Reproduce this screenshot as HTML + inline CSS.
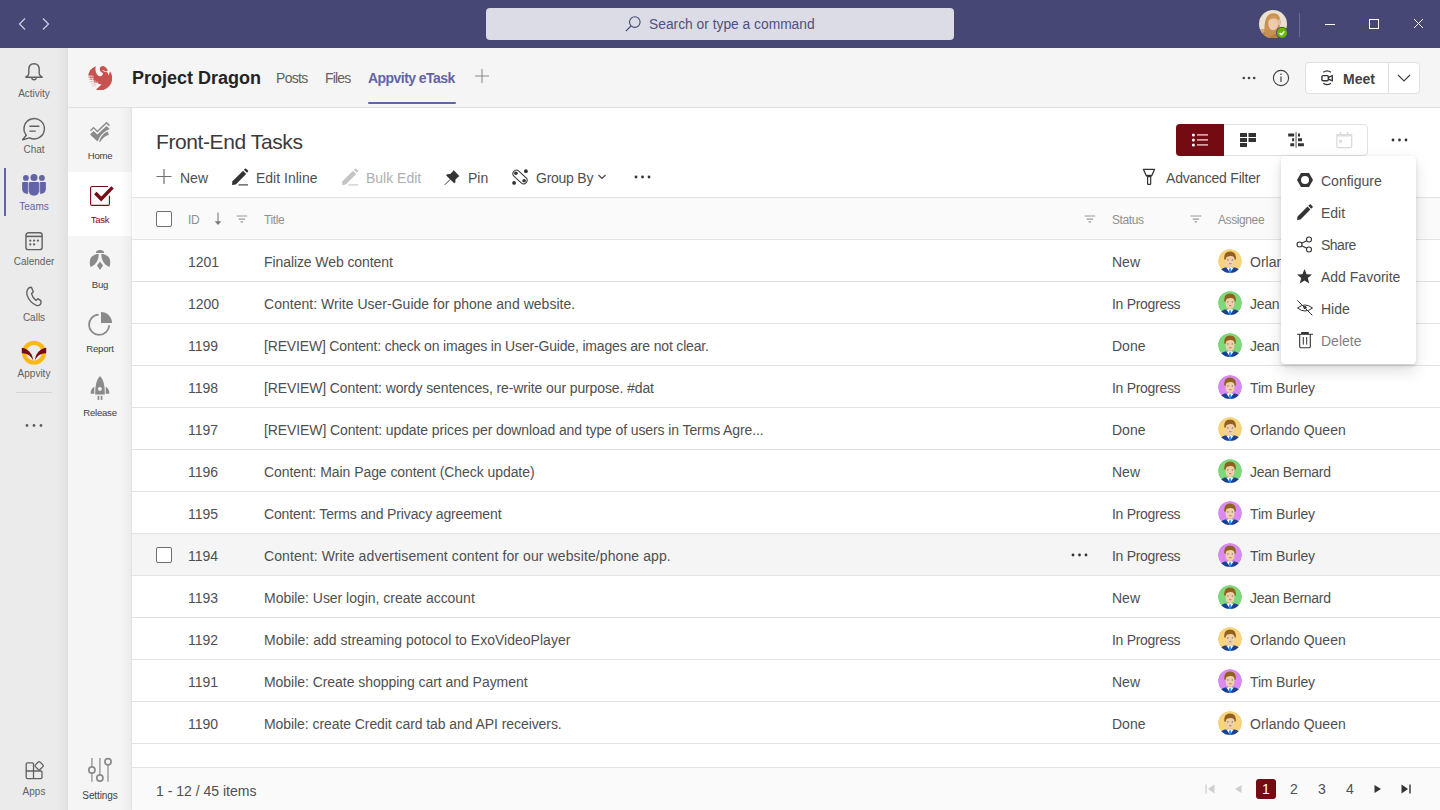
<!DOCTYPE html>
<html><head><meta charset="utf-8">
<style>
*{box-sizing:border-box;margin:0;padding:0}
html,body{width:1440px;height:810px;overflow:hidden;background:#fff;font-family:"Liberation Sans",sans-serif;color:#252423}
.a{position:absolute}
.t{position:absolute;white-space:nowrap;line-height:1}
#top{left:0;top:0;width:1440px;height:48px;background:#464775}
#search{left:486px;top:8px;width:468px;height:32px;background:#dcdce6;border-radius:4px}
#rail{left:0;top:48px;width:68px;height:762px;background:#ebebeb}
#hdr{left:68px;top:48px;width:1372px;height:60px;background:#f5f5f5;border-bottom:1px solid #e0e0e0}
#side{left:68px;top:108px;width:64px;height:702px;background:#f5f5f5}
#main{left:132px;top:108px;width:1308px;height:702px;background:#fff}
.rl{font-size:10px;color:#616161;text-align:center;width:68px;left:0}
.sl{font-size:9.6px;color:#424242;text-align:center;width:64px;left:68px;letter-spacing:-0.25px}
.c14{font-size:14px;color:#4f4f4f}
.hd{font-size:12px;color:#8f8f8f;letter-spacing:-0.4px}
.rowb{position:absolute;left:132px;width:1308px;height:1px;background:#e3e3e3}
.mi{font-size:14px;color:#4f4f4f}
</style></head><body>
<div id="top" class="a"></div>
<div id="search" class="a"></div>
<div id="rail" class="a"></div>
<div id="hdr" class="a"></div>
<div id="side" class="a"></div>
<div id="main" class="a"></div>


<svg class="a" style="left:16px;top:16px" width="40" height="16" viewBox="0 0 40 16">
<path d="M9 2.5 L3.5 8 L9 13.5" fill="none" stroke="#d0d0e4" stroke-width="1.2"/>
<path d="M27 2.5 L32.5 8 L27 13.5" fill="none" stroke="#d0d0e4" stroke-width="1.2"/>
</svg>
<svg class="a" style="left:625px;top:16px" width="16" height="16" viewBox="0 0 16 16">
<circle cx="9.8" cy="6.1" r="5.3" fill="none" stroke="#464775" stroke-width="1.1"/>
<path d="M6 10 L0.8 15.2" stroke="#464775" stroke-width="1.1"/>
</svg>
<div class="t" style="left:649px;top:18px;font-size:13.8px;color:#4f5080">Search or type a command</div>
<svg class="a" style="left:1259px;top:10px" width="30" height="30" viewBox="0 0 30 30">
<defs><clipPath id="av"><circle cx="14" cy="14" r="14"/></clipPath></defs>
<g clip-path="url(#av)"><rect width="28" height="28" fill="#ebe1d0"/>
<rect x="0" y="19" width="28" height="9" fill="#cfae84"/>
<path d="M1 28 Q3 21 9.5 20.5 L18.5 20.5 Q25 21 27 28Z" fill="#b7794c"/>
<path d="M5.8 27 Q4.5 16 6.8 9 Q9 3.2 14.5 3.3 Q20 3.6 21 9 Q21.6 14 20.4 18.5 Q18.5 22.5 16 24.5 L10 27Z" fill="#c8914f"/>
<ellipse cx="14.2" cy="13.6" rx="5" ry="6.6" fill="#eecab0"/>
<path d="M8.6 11.5 Q9.3 5.4 14.6 5.3 Q19.5 5.6 19.8 10.5 Q16.5 7.6 12.5 8.8 Q10 9.8 8.6 11.5Z" fill="#cd9859"/>
<ellipse cx="20.3" cy="12.2" rx="1.9" ry="3" fill="#e4bca0"/>
</g>
<circle cx="23" cy="22.8" r="6" fill="#464775"/>
<circle cx="23" cy="22.8" r="5.1" fill="#6bb700"/>
<path d="M20.6 23 L22.4 24.7 L25.4 21.5" fill="none" stroke="#fff" stroke-width="1.4"/>
</svg>
<div class="a" style="left:1299px;top:13px;width:1px;height:24px;background:#6b6c93"></div>
<svg class="a" style="left:1320px;top:14px" width="110" height="20" viewBox="0 0 110 20">
<path d="M5 10.5 H15" stroke="#fff" stroke-width="1"/>
<rect x="49.5" y="5.5" width="9" height="9" fill="none" stroke="#fff" stroke-width="1"/>
<path d="M94 5 L103 14 M103 5 L94 14" stroke="#fff" stroke-width="1"/>
</svg>


<svg class="a" style="left:22px;top:60px" width="24" height="24" viewBox="0 0 24 24">
<path d="M12 3.7 C8.3 3.7 6.8 6.6 6.8 9.6 V13.4 Q6.8 15.4 3.8 17.2 H20.2 Q17.2 15.4 17.2 13.4 V9.6 C17.2 6.6 15.7 3.7 12 3.7Z" fill="none" stroke="#616161" stroke-width="1.4" stroke-linejoin="round"/>
<path d="M9.8 17.6 A2.2 2.2 0 0 0 14.2 17.6" fill="none" stroke="#616161" stroke-width="1.4"/>
</svg>
<div class="t rl" style="top:89px">Activity</div>
<svg class="a" style="left:20px;top:115px" width="28" height="28" viewBox="0 0 28 28">
<path d="M6.3 20.2 A10.2 10.2 0 1 1 9.5 22.8 L2.6 24.8 Z" fill="none" stroke="#616161" stroke-width="1.4" stroke-linejoin="round"/>
<path d="M9.9 11.3 H18.9 M9.9 16.1 H15.3" stroke="#616161" stroke-width="1.4" stroke-linecap="round"/>
</svg>
<div class="t rl" style="top:145px">Chat</div>
<div class="a" style="left:4px;top:168px;width:2px;height:48px;background:#6264a7"></div>
<svg class="a" style="left:16px;top:168px" width="36" height="32" viewBox="0 0 36 32">
<circle cx="9.9" cy="9.9" r="2.9" fill="#6264a7"/><circle cx="18" cy="9.4" r="3.5" fill="#6264a7"/><circle cx="25.9" cy="9.9" r="2.9" fill="#6264a7"/>
<rect x="11.5" y="14.8" width="13" height="9.5" fill="#b7b8d8"/>
<path d="M6.1 15 Q6.1 14 7.1 14 H11.9 V25.9 Q6.1 25.9 6.1 20.5Z" fill="#6264a7"/>
<path d="M29.9 15 Q29.9 14 28.9 14 H24.1 V25.9 Q29.9 25.9 29.9 20.5Z" fill="#6264a7"/>
<path d="M13 14.6 Q13 14 13.6 14 H22.3 Q22.9 14 22.9 14.6 V22.8 Q22.9 27.7 18 27.7 Q13 27.7 13 22.8Z" fill="#6264a7"/>
</svg>
<div class="t rl" style="top:202px;color:#6264a7">Teams</div>
<svg class="a" style="left:24px;top:231px" width="20" height="20" viewBox="0 0 20 20">
<rect x="1.95" y="1.75" width="16.2" height="16.9" rx="2.5" fill="none" stroke="#616161" stroke-width="1.4"/>
<path d="M1.95 5.4 H18.15" stroke="#616161" stroke-width="1.6"/>
<circle cx="6.3" cy="9.6" r="1.15" fill="#616161"/><circle cx="10.1" cy="9.6" r="1.15" fill="#616161"/><circle cx="13.9" cy="9.6" r="1.15" fill="#616161"/>
<circle cx="6.3" cy="13.4" r="1.15" fill="#616161"/><circle cx="10.1" cy="13.4" r="1.15" fill="#616161"/>
</svg>
<div class="t rl" style="top:257px">Calender</div>
<svg class="a" style="left:24px;top:286px" width="20" height="22" viewBox="0 0 20 22">
<path d="M5 1.7 L7.4 1.3 L9.3 5.7 L7.5 7.7 Q8.5 11.8 12 14.4 L13.8 12.7 L17 14.9 L16.8 17.7 Q15.6 20.2 12.4 19.4 Q5.6 16.6 2.9 8.6 Q2.3 4 5 1.7Z" fill="none" stroke="#616161" stroke-width="1.4" stroke-linejoin="round"/>
</svg>
<div class="t rl" style="top:313px">Calls</div>
<svg class="a" style="left:18px;top:336px" width="32" height="32" viewBox="0 0 32 32">
<circle cx="16" cy="16.8" r="9.9" fill="none" stroke="#fdb913" stroke-width="4.3"/>
<path d="M3.8 11.8 Q10.5 13 13.5 18.5 Q14.8 21.3 15.3 24.3 Q13.6 21.2 10.8 19 Q7.5 17 3.8 17.3 Z" fill="#760d16"/>
<path d="M28.2 11.8 Q21.5 13 18.5 18.5 Q17.2 21.3 16.7 24.3 Q18.4 21.2 21.2 19 Q24.5 17 28.2 17.3 Z" fill="#760d16"/>
</svg>
<div class="t rl" style="top:369px">Appvity</div>
<div class="a" style="left:16px;top:392px;width:36px;height:1px;background:#d6d6d6"></div>
<svg class="a" style="left:25px;top:423px" width="18" height="5" viewBox="0 0 18 5">
<circle cx="2" cy="2.5" r="1.4" fill="#616161"/><circle cx="9" cy="2.5" r="1.4" fill="#616161"/><circle cx="16" cy="2.5" r="1.4" fill="#616161"/>
</svg>
<svg class="a" style="left:18px;top:754px" width="32" height="32" viewBox="0 0 32 32">
<path d="M8.2 10 Q8.2 8.9 9.5 8.9 H14.3 Q15.5 8.9 15.5 10 V17 H22.8 Q24 17 24 18.3 V23.3 Q24 24.6 22.8 24.6 H9.5 Q8.2 24.6 8.2 23.3Z M8.2 17 H15.5 V24.6" fill="none" stroke="#616161" stroke-width="1.3" stroke-linejoin="round"/>
<rect x="17.9" y="8.5" width="6.5" height="6.5" rx="1.2" transform="rotate(45 21.15 11.75)" fill="none" stroke="#616161" stroke-width="1.3"/>
</svg>
<div class="t rl" style="top:787px">Apps</div>


<div class="a" style="left:68px;top:172px;width:64px;height:64px;background:#fff"></div>
<svg class="a" style="left:90px;top:122px" width="20" height="20" viewBox="0 0 20 20">
<path d="M0 8.2 L3.5 4.7 L7.4 8.6 L16.5 -0.3 L20 3.2 L19 4.2 L16.5 1.8 L7.4 10.4 L3.5 6.5 L1 9.2Z" fill="#8a8a8a"/>
<path d="M0 12.6 L3.5 9 L7.4 12.4 L16.5 4 L19.7 7 Q13 9.5 9.5 15.5 L7.5 19.4Z" fill="#8a8a8a"/>
<path d="M9 19.7 Q11.5 12 17.6 9.6 L18.9 13 Q13.5 14 10.4 19.8Z" fill="#8a8a8a"/>
</svg>
<div class="t sl" style="top:151px">Home</div>
<svg class="a" style="left:84px;top:180px" width="36" height="32" viewBox="0 0 36 32">
<path d="M24 6.5 H8 Q6.6 6.5 6.6 7.9 V24 Q6.6 25.4 8 25.4 H24 Q25.4 25.4 25.4 24 V15.8" fill="none" stroke="#7a0a14" stroke-width="1.1"/>
<path d="M11.3 13.1 L17.2 19.1 L28.5 7.4" fill="none" stroke="#7a0a14" stroke-width="3.5"/>
</svg>
<div class="t sl" style="top:215px;color:#7a0a14">Task</div>
<svg class="a" style="left:84px;top:244px" width="32" height="32" viewBox="0 0 32 32">
<path d="M11.9 8.9 Q12 5.9 16 5.9 Q20 5.9 20 8.9 Z" fill="#8a8a8a"/>
<path d="M14.6 10 C14.9 15.5 12.5 20.5 6.5 22.9 C5.2 19 5.5 15 7.9 12.6 C9.8 10.8 12.5 10 14.6 10Z" fill="#8a8a8a"/>
<path d="M17.4 10 C17.1 15.5 19.5 20.5 25.5 22.9 C26.8 19 26.5 15 24.1 12.6 C22.2 10.8 19.5 10 17.4 10Z" fill="#8a8a8a"/>
<path d="M16 17.6 L19 21.4 L16 26 L13 21.4Z" fill="#8a8a8a"/>
</svg>
<div class="t sl" style="top:280px">Bug</div>
<svg class="a" style="left:84px;top:308px" width="32" height="32" viewBox="0 0 32 32">
<path d="M14.6 6.7 A10.1 10.1 0 1 0 25.2 17.2" fill="none" stroke="#8a8a8a" stroke-width="1.8"/>
<path d="M17 4 A11 11 0 0 1 28 15 H17Z" fill="#8a8a8a"/>
</svg>
<div class="t sl" style="top:344px">Report</div>
<svg class="a" style="left:90px;top:376px" width="20" height="25" viewBox="0 0 20 25">
<path d="M10 0 Q15.2 5 14.8 18.6 H5.2 Q4.8 5 10 0Z" fill="#8a8a8a"/>
<circle cx="9.9" cy="12.9" r="1.9" fill="#f5f5f5"/>
<path d="M4.3 10.8 Q0.6 13 0.6 17.7 L4.3 17.7Z M15.7 10.8 Q19.4 13 19.4 17.7 L15.7 17.7Z" fill="#8a8a8a"/>
<rect x="7.6" y="19.9" width="1.7" height="4" fill="#8a8a8a"/><rect x="10.7" y="19.9" width="1.7" height="4" fill="#8a8a8a"/>
</svg>
<div class="t sl" style="top:408px">Release</div>
<svg class="a" style="left:84px;top:754px" width="32" height="32" viewBox="0 0 32 32">
<path d="M7.9 4 V27.8 M15.9 4 V27.8 M24 4 V27.8" stroke="#a8a8a8" stroke-width="1.7"/>
<circle cx="7.9" cy="16" r="3.1" fill="#f5f5f5" stroke="#8a8a8a" stroke-width="1.7"/>
<circle cx="15.9" cy="24" r="3.1" fill="#f5f5f5" stroke="#8a8a8a" stroke-width="1.7"/>
<circle cx="24" cy="7.7" r="3.1" fill="#f5f5f5" stroke="#8a8a8a" stroke-width="1.7"/>
</svg>
<div class="t sl" style="top:791px;font-size:10px;letter-spacing:-0.1px">Settings</div>


<div class="a" style="left:56px;top:48px;width:12px;height:762px;background:linear-gradient(90deg,rgba(0,0,0,0),rgba(0,0,0,0.035) 85%,rgba(0,0,0,0.06))"></div>
<div class="a" style="left:119px;top:108px;width:13px;height:702px;background:linear-gradient(90deg,rgba(0,0,0,0),rgba(0,0,0,0.03) 85%,rgba(0,0,0,0.09))"></div>
<svg class="a" style="left:88px;top:66px" width="24" height="24" viewBox="0 0 24 24">
<path d="M8 0.2 C7 2.5 7.3 6 9.1 8.4 C10.2 9.8 11.5 10.3 12.5 10.2 C13.8 10 14.8 9.2 14.9 7 C13.2 6.5 11.8 5 11.8 3.2 C11.8 2 12.3 1.1 12.9 0.8 C13.7 0.3 14.5 0.1 15.3 0.1 C16.8 0.5 18 1.5 18.7 2.5 L19.8 4.6 L17.8 5.6 L19.4 6.6 L20.8 9.4 L21.9 5.3 A12 12 0 0 1 8 23.6 L13.6 18.4 L9.75 17.6 L9.75 15.3 L5.3 14.6 L5.3 9.75 L0.1 9.4 A12 12 0 0 1 8 0.2 Z" fill="#c8524e"/>
<path d="M14.6 3.9 L18 5.6 L17.6 6.3 L14.3 4.7 Z" fill="#f5f5f5"/>
<g fill="#c8524e"><rect x="0.6" y="10.4" width="1" height="1.3"/><rect x="2.1" y="10.5" width="1.6" height="1.6"/><rect x="3.9" y="10.4" width="1.2" height="1.3"/>
<rect x="2.4" y="12.6" width="1.4" height="1.3"/><rect x="6.2" y="15.1" width="1.5" height="1.6"/><rect x="8" y="15.1" width="1.5" height="1.6"/></g>
<g fill="#e3a3a0"><rect x="0.8" y="12.8" width="0.9" height="1"/><rect x="4" y="12.7" width="1" height="1"/><rect x="1.6" y="15.2" width="0.9" height="0.9"/><rect x="3.1" y="15.1" width="1" height="1"/><rect x="4.6" y="15.2" width="1" height="1"/>
<rect x="3.6" y="17.5" width="1" height="1"/><rect x="5.5" y="17.5" width="1.2" height="1"/><rect x="7.4" y="17.8" width="1" height="1"/><rect x="4.6" y="19.5" width="1" height="0.9"/><rect x="6.5" y="19.5" width="1" height="0.9"/></g>
</svg>
<div class="t" style="left:132px;top:69px;font-size:18px;font-weight:bold;color:#242424">Project Dragon</div>
<div class="t" style="left:276px;top:71px;font-size:14px;color:#616161;letter-spacing:-0.7px">Posts</div>
<div class="t" style="left:325px;top:71px;font-size:14px;color:#616161;letter-spacing:-0.8px">Files</div>
<div class="t" style="left:368px;top:71px;font-size:14px;font-weight:bold;letter-spacing:-0.55px;color:#6264a7">Appvity eTask</div>
<div class="a" style="left:368px;top:102px;width:88px;height:2px;background:#6264a7;border-radius:1px"></div>
<svg class="a" style="left:474px;top:68px" width="16" height="16" viewBox="0 0 16 16">
<path d="M8 1 V15 M1 8 H15" stroke="#8a8a8a" stroke-width="1.1"/>
</svg>
<svg class="a" style="left:1242px;top:76px" width="14" height="4" viewBox="0 0 14 4">
<circle cx="1.8" cy="2" r="1.3" fill="#424242"/><circle cx="7" cy="2" r="1.3" fill="#424242"/><circle cx="12.2" cy="2" r="1.3" fill="#424242"/>
</svg>
<svg class="a" style="left:1272px;top:69px" width="18" height="18" viewBox="0 0 18 18">
<circle cx="9" cy="9" r="7.6" fill="none" stroke="#424242" stroke-width="1.1"/>
<path d="M9 7.5 V13" stroke="#424242" stroke-width="1.2"/><circle cx="9" cy="5.2" r="0.8" fill="#424242"/>
</svg>
<div class="a" style="left:1305px;top:62px;width:115px;height:32px;background:#fff;border:1px solid #e0e0e0;border-radius:4px"></div>
<div class="a" style="left:1388px;top:63px;width:1px;height:30px;background:#e0e0e0"></div>
<svg class="a" style="left:1319px;top:69px" width="16" height="17" viewBox="0 0 16 17">
<rect x="2.9" y="6.6" width="6.4" height="5.2" rx="1.2" fill="none" stroke="#333" stroke-width="1.4"/>
<path d="M9.6 8.3 L13.3 6.5 V11.9 L9.6 10.1" fill="none" stroke="#333" stroke-width="1.3" stroke-linejoin="round"/>
<path d="M4.3 3.3 Q8.1 0.4 11.9 3.3 M4.3 14.2 Q8.1 17.1 11.9 14.2" fill="none" stroke="#333" stroke-width="1.1"/>
</svg>
<div class="t" style="left:1343px;top:72px;font-size:14px;font-weight:bold;color:#424242">Meet</div>
<svg class="a" style="left:1396px;top:72px" width="16" height="12" viewBox="0 0 16 12">
<path d="M2 3 L8 9 L14 3" fill="none" stroke="#424242" stroke-width="1.2"/>
</svg>


<div class="t" style="left:156px;top:131px;font-size:21px;letter-spacing:-0.4px;color:#3b3a39">Front-End Tasks</div>
<svg class="a" style="left:156px;top:168px" width="16" height="17" viewBox="0 0 16 17">
<path d="M8 1 V16 M0.5 8.5 H15.5" stroke="#707070" stroke-width="1.2"/>
</svg>
<div class="t c14" style="left:180px;top:171px">New</div>
<svg class="a" style="left:231px;top:168px" width="18" height="18" viewBox="0 0 18 18">
<path d="M0.9 17 L1.5 13.2 L12 2.7 L15.2 5.9 L4.7 16.4Z" fill="#333"/>
<path d="M12.9 1.8 L14 0.7 Q14.6 0.1 15.2 0.7 L17 2.5 Q17.6 3.1 17 3.7 L15.9 4.8Z" fill="#333"/>
<path d="M7.5 16.9 H17" stroke="#333" stroke-width="1.1"/>
</svg>
<div class="t c14" style="left:256px;top:171px">Edit Inline</div>
<svg class="a" style="left:341px;top:168px" width="18" height="18" viewBox="0 0 18 18">
<path d="M0.9 17 L1.5 13.2 L12 2.7 L15.2 5.9 L4.7 16.4Z" fill="#c4c4c4"/>
<path d="M12.9 1.8 L14 0.7 Q14.6 0.1 15.2 0.7 L17 2.5 Q17.6 3.1 17 3.7 L15.9 4.8Z" fill="#c4c4c4"/>
<path d="M7.5 16.9 H17" stroke="#c4c4c4" stroke-width="1.1"/>
</svg>
<div class="t c14" style="left:366px;top:171px;color:#b0b0b0">Bulk Edit</div>
<svg class="a" style="left:444px;top:169px" width="16" height="17" viewBox="0 0 16 17">
<path d="M9.5 1 L15.5 7.2 L14.3 7.7 L11.5 10.5 L11.3 13.6 L10.2 14.3 L2.2 6.4 L3 5.2 L6.2 5 L9 2.2Z" fill="#333"/>
<path d="M6.3 10.3 L0.8 15.8" stroke="#333" stroke-width="1"/>
</svg>
<div class="t c14" style="left:468px;top:171px">Pin</div>
<svg class="a" style="left:512px;top:169px" width="17" height="17" viewBox="0 0 17 17">
<rect x="-0.3" y="4.5" width="16.6" height="7" rx="3.5" transform="rotate(42 8 8)" fill="none" stroke="#333" stroke-width="1"/>
<circle cx="3.9" cy="4.2" r="1.8" fill="#333"/><circle cx="12.1" cy="11.8" r="1.8" fill="#333"/>
<circle cx="13.9" cy="2.2" r="1.9" fill="#333"/><circle cx="2.1" cy="13.9" r="1.9" fill="#333"/>
</svg>
<div class="t c14" style="left:536px;top:171px;letter-spacing:-0.25px">Group By</div>
<svg class="a" style="left:597px;top:173px" width="10" height="8" viewBox="0 0 10 8">
<path d="M1.5 2 L5 5.5 L8.5 2" fill="none" stroke="#424242" stroke-width="1.2"/>
</svg>
<svg class="a" style="left:634px;top:175px" width="17" height="4" viewBox="0 0 17 4">
<circle cx="2" cy="2" r="1.4" fill="#333"/><circle cx="8.5" cy="2" r="1.4" fill="#333"/><circle cx="15" cy="2" r="1.4" fill="#333"/>
</svg>
<div class="a" style="left:1176px;top:124px;width:192px;height:32px;border:1px solid #e0e0e0;border-radius:4px;background:#fff"></div>
<div class="a" style="left:1176px;top:124px;width:48px;height:32px;background:#740a12;border-radius:4px 0 0 4px"></div>
<svg class="a" style="left:1190px;top:132px" width="20" height="16" viewBox="0 0 20 16">
<circle cx="3.4" cy="2.9" r="1.5" fill="#fff"/><circle cx="3.4" cy="7.9" r="1.5" fill="#fff"/><circle cx="3.4" cy="12.9" r="1.5" fill="#fff"/>
<path d="M7 2.9 H18 M7 7.9 H18 M7 12.9 H18" stroke="#d4a0a4" stroke-width="1.9"/>
</svg>
<svg class="a" style="left:1240px;top:133px" width="17" height="15" viewBox="0 0 17 15">
<rect x="0" y="0" width="7" height="4" fill="#333"/><rect x="8.5" y="0" width="7.5" height="4" fill="#333"/>
<rect x="0" y="5" width="7" height="4" fill="#333"/><rect x="8.5" y="5" width="7.5" height="4" fill="#333"/>
<rect x="0" y="10" width="7" height="4" fill="#333"/>
</svg>
<svg class="a" style="left:1286px;top:130px" width="20" height="20" viewBox="0 0 20 20">
<g stroke="#333" stroke-width="3" stroke-linejoin="round">
<path d="M2.2 4.9 H8.2 M12 4.9 H14 M6.1 9.8 H8.2 M12 9.8 H16 M4.3 14.8 H8.2 M12 14.8 H17.9"/></g>
<path d="M10.1 1.9 V17.7" stroke="#a0a0a0" stroke-width="1.8"/>
</svg>
<svg class="a" style="left:1334px;top:130px" width="20" height="20" viewBox="0 0 20 20">
<rect x="2.9" y="4.6" width="14.8" height="13" rx="1.2" fill="none" stroke="#d8d8d8" stroke-width="1.2"/>
<rect x="2.3" y="4" width="16" height="2.6" rx="1" fill="#dcdcdc"/>
<path d="M6.4 1.9 V4.6 M13.6 1.9 V4.6" stroke="#d8d8d8" stroke-width="1.1"/>
<rect x="5" y="10" width="3" height="2.7" fill="#dcdcdc"/>
</svg>
<svg class="a" style="left:1391px;top:138px" width="17" height="4" viewBox="0 0 17 4">
<circle cx="2" cy="2" r="1.4" fill="#333"/><circle cx="8.5" cy="2" r="1.4" fill="#333"/><circle cx="15" cy="2" r="1.4" fill="#333"/>
</svg>
<svg class="a" style="left:1142px;top:168px" width="14" height="18" viewBox="0 0 14 18">
<path d="M1.5 1.4 H12.5 L9.8 7.6 H4.2 Z" fill="none" stroke="#333" stroke-width="1.3" stroke-linejoin="round"/>
<path d="M4.2 7.7 H9.8" stroke="#333" stroke-width="1.8"/>
<rect x="5.6" y="8.7" width="3.1" height="7.7" rx="0.6" fill="none" stroke="#333" stroke-width="1.2"/>
</svg>
<div class="t c14" style="left:1166px;top:171px;letter-spacing:-0.2px">Advanced Filter</div>


<div class="a" style="left:132px;top:197px;width:1308px;height:43px;background:#fafafa;border-top:1px solid #e3e3e3;border-bottom:1px solid #e3e3e3"></div>
<div class="a" style="left:156px;top:211px;width:16px;height:16px;border:1.5px solid #6e6e6e;border-radius:2px;background:#fff"></div>
<div class="t hd" style="left:188px;top:214px">ID</div>
<svg class="a" style="left:213px;top:212px" width="10" height="14" viewBox="0 0 10 14">
<path d="M5 0.6 V10" stroke="#7a7a7a" stroke-width="1.1"/><path d="M1.7 9.3 H8.3 L5 13.1Z" fill="#7a7a7a"/>
</svg>

<svg class="a" style="left:236px;top:214px" width="12" height="10" viewBox="0 0 12 10">
<path d="M0.6 2 H11.2 M2.7 5.1 H9.1 M4.5 7.9 H7.1" stroke="#9a9a9a" stroke-width="1.2"/></svg>
<div class="t hd" style="left:264px;top:214px">Title</div>
<svg class="a" style="left:1084px;top:214px" width="12" height="10" viewBox="0 0 12 10">
<path d="M0.6 2 H11.2 M2.7 5.1 H9.1 M4.5 7.9 H7.1" stroke="#9a9a9a" stroke-width="1.2"/></svg>
<div class="t hd" style="left:1112px;top:214px">Status</div>
<svg class="a" style="left:1190px;top:214px" width="12" height="10" viewBox="0 0 12 10">
<path d="M0.6 2 H11.2 M2.7 5.1 H9.1 M4.5 7.9 H7.1" stroke="#9a9a9a" stroke-width="1.2"/></svg>
<div class="t hd" style="left:1218px;top:214px">Assignee</div>
<div class="rowb" style="top:281px"></div>
<div class="t c14" style="left:188px;top:255px">1201</div>
<div class="t c14" style="left:264px;top:255px;letter-spacing:-0.089px">Finalize Web content</div>
<div class="t c14" style="left:1112px;top:255px;letter-spacing:0px">New</div>
<svg class="a" style="left:1218px;top:249px" width="24" height="24" viewBox="0 0 24 24">
<defs><clipPath id="cp1218249"><circle cx="12" cy="12" r="12"/></clipPath></defs>
<g clip-path="url(#cp1218249)"><circle cx="12" cy="12" r="12" fill="#f7d47c"/>
<path d="M1 24.5 Q2 19.5 7 18.4 L17 18.4 Q22 19.5 23 24.5 Z" fill="#1d3f8f"/>
<rect x="10" y="15" width="4" height="4" fill="#e6bc98"/>
<path d="M8.3 18.4 L12 23.5 L15.7 18.4 Z" fill="#fff"/>
<path d="M11.2 19.3 H12.8 L13.3 24 H10.7Z" fill="#2a8cf0"/>
<path d="M7.6 9 Q7.6 5.8 12 5.8 Q16.4 5.8 16.4 9 V13 Q16.4 17.6 12 17.6 Q7.6 17.6 7.6 13Z" fill="#f0cfab"/>
<path d="M6.2 10.5 Q5.6 2.4 12 2.4 Q18.4 2.4 18 10.5 L16.5 10.5 Q16.6 6.8 12.5 6.9 Q9.2 7 8.4 8.2 L7.6 10.8Z" fill="#91621f"/>
<circle cx="9.9" cy="10.9" r="0.65" fill="#6a6a6a"/><circle cx="14.3" cy="10.9" r="0.65" fill="#6a6a6a"/>
<ellipse cx="12.3" cy="14.7" rx="1.4" ry="0.6" fill="#b98676"/>
</g></svg>
<div class="t c14" style="left:1250px;top:255px;letter-spacing:0px">Orlando Queen</div>
<div class="rowb" style="top:323px"></div>
<div class="t c14" style="left:188px;top:297px">1200</div>
<div class="t c14" style="left:264px;top:297px;letter-spacing:0.019px">Content: Write User-Guide for phone and website.</div>
<div class="t c14" style="left:1112px;top:297px;letter-spacing:-0.3px">In Progress</div>
<svg class="a" style="left:1218px;top:291px" width="24" height="24" viewBox="0 0 24 24">
<defs><clipPath id="cp1218291"><circle cx="12" cy="12" r="12"/></clipPath></defs>
<g clip-path="url(#cp1218291)"><circle cx="12" cy="12" r="12" fill="#7ed87a"/>
<path d="M1 24.5 Q2 19.5 7 18.4 L17 18.4 Q22 19.5 23 24.5 Z" fill="#1d3f8f"/>
<rect x="10" y="15" width="4" height="4" fill="#e6bc98"/>
<path d="M8.3 18.4 L12 23.5 L15.7 18.4 Z" fill="#fff"/>
<path d="M11.2 19.3 H12.8 L13.3 24 H10.7Z" fill="#2a8cf0"/>
<path d="M7.6 9 Q7.6 5.8 12 5.8 Q16.4 5.8 16.4 9 V13 Q16.4 17.6 12 17.6 Q7.6 17.6 7.6 13Z" fill="#f0cfab"/>
<path d="M6.2 10.5 Q5.6 2.4 12 2.4 Q18.4 2.4 18 10.5 L16.5 10.5 Q16.6 6.8 12.5 6.9 Q9.2 7 8.4 8.2 L7.6 10.8Z" fill="#91621f"/>
<circle cx="9.9" cy="10.9" r="0.65" fill="#6a6a6a"/><circle cx="14.3" cy="10.9" r="0.65" fill="#6a6a6a"/>
<ellipse cx="12.3" cy="14.7" rx="1.4" ry="0.6" fill="#b98676"/>
</g></svg>
<div class="t c14" style="left:1250px;top:297px;letter-spacing:-0.28px">Jean Bernard</div>
<div class="rowb" style="top:365px"></div>
<div class="t c14" style="left:188px;top:339px">1199</div>
<div class="t c14" style="left:264px;top:339px;letter-spacing:-0.171px">[REVIEW] Content: check on images in User-Guide, images are not clear.</div>
<div class="t c14" style="left:1112px;top:339px;letter-spacing:0px">Done</div>
<svg class="a" style="left:1218px;top:333px" width="24" height="24" viewBox="0 0 24 24">
<defs><clipPath id="cp1218333"><circle cx="12" cy="12" r="12"/></clipPath></defs>
<g clip-path="url(#cp1218333)"><circle cx="12" cy="12" r="12" fill="#7ed87a"/>
<path d="M1 24.5 Q2 19.5 7 18.4 L17 18.4 Q22 19.5 23 24.5 Z" fill="#1d3f8f"/>
<rect x="10" y="15" width="4" height="4" fill="#e6bc98"/>
<path d="M8.3 18.4 L12 23.5 L15.7 18.4 Z" fill="#fff"/>
<path d="M11.2 19.3 H12.8 L13.3 24 H10.7Z" fill="#2a8cf0"/>
<path d="M7.6 9 Q7.6 5.8 12 5.8 Q16.4 5.8 16.4 9 V13 Q16.4 17.6 12 17.6 Q7.6 17.6 7.6 13Z" fill="#f0cfab"/>
<path d="M6.2 10.5 Q5.6 2.4 12 2.4 Q18.4 2.4 18 10.5 L16.5 10.5 Q16.6 6.8 12.5 6.9 Q9.2 7 8.4 8.2 L7.6 10.8Z" fill="#91621f"/>
<circle cx="9.9" cy="10.9" r="0.65" fill="#6a6a6a"/><circle cx="14.3" cy="10.9" r="0.65" fill="#6a6a6a"/>
<ellipse cx="12.3" cy="14.7" rx="1.4" ry="0.6" fill="#b98676"/>
</g></svg>
<div class="t c14" style="left:1250px;top:339px;letter-spacing:-0.28px">Jean Bernard</div>
<div class="rowb" style="top:407px"></div>
<div class="t c14" style="left:188px;top:381px">1198</div>
<div class="t c14" style="left:264px;top:381px;letter-spacing:-0.115px">[REVIEW] Content: wordy sentences, re-write our purpose. #dat</div>
<div class="t c14" style="left:1112px;top:381px;letter-spacing:-0.3px">In Progress</div>
<svg class="a" style="left:1218px;top:375px" width="24" height="24" viewBox="0 0 24 24">
<defs><clipPath id="cp1218375"><circle cx="12" cy="12" r="12"/></clipPath></defs>
<g clip-path="url(#cp1218375)"><circle cx="12" cy="12" r="12" fill="#d98af0"/>
<path d="M1 24.5 Q2 19.5 7 18.4 L17 18.4 Q22 19.5 23 24.5 Z" fill="#1d3f8f"/>
<rect x="10" y="15" width="4" height="4" fill="#e6bc98"/>
<path d="M8.3 18.4 L12 23.5 L15.7 18.4 Z" fill="#fff"/>
<path d="M11.2 19.3 H12.8 L13.3 24 H10.7Z" fill="#2a8cf0"/>
<path d="M7.6 9 Q7.6 5.8 12 5.8 Q16.4 5.8 16.4 9 V13 Q16.4 17.6 12 17.6 Q7.6 17.6 7.6 13Z" fill="#f0cfab"/>
<path d="M6.2 10.5 Q5.6 2.4 12 2.4 Q18.4 2.4 18 10.5 L16.5 10.5 Q16.6 6.8 12.5 6.9 Q9.2 7 8.4 8.2 L7.6 10.8Z" fill="#91621f"/>
<circle cx="9.9" cy="10.9" r="0.65" fill="#6a6a6a"/><circle cx="14.3" cy="10.9" r="0.65" fill="#6a6a6a"/>
<ellipse cx="12.3" cy="14.7" rx="1.4" ry="0.6" fill="#b98676"/>
</g></svg>
<div class="t c14" style="left:1250px;top:381px;letter-spacing:-0.15px">Tim Burley</div>
<div class="rowb" style="top:449px"></div>
<div class="t c14" style="left:188px;top:423px">1197</div>
<div class="t c14" style="left:264px;top:423px;letter-spacing:-0.105px">[REVIEW] Content: update prices per download and type of users in Terms Agre...</div>
<div class="t c14" style="left:1112px;top:423px;letter-spacing:0px">Done</div>
<svg class="a" style="left:1218px;top:417px" width="24" height="24" viewBox="0 0 24 24">
<defs><clipPath id="cp1218417"><circle cx="12" cy="12" r="12"/></clipPath></defs>
<g clip-path="url(#cp1218417)"><circle cx="12" cy="12" r="12" fill="#f7d47c"/>
<path d="M1 24.5 Q2 19.5 7 18.4 L17 18.4 Q22 19.5 23 24.5 Z" fill="#1d3f8f"/>
<rect x="10" y="15" width="4" height="4" fill="#e6bc98"/>
<path d="M8.3 18.4 L12 23.5 L15.7 18.4 Z" fill="#fff"/>
<path d="M11.2 19.3 H12.8 L13.3 24 H10.7Z" fill="#2a8cf0"/>
<path d="M7.6 9 Q7.6 5.8 12 5.8 Q16.4 5.8 16.4 9 V13 Q16.4 17.6 12 17.6 Q7.6 17.6 7.6 13Z" fill="#f0cfab"/>
<path d="M6.2 10.5 Q5.6 2.4 12 2.4 Q18.4 2.4 18 10.5 L16.5 10.5 Q16.6 6.8 12.5 6.9 Q9.2 7 8.4 8.2 L7.6 10.8Z" fill="#91621f"/>
<circle cx="9.9" cy="10.9" r="0.65" fill="#6a6a6a"/><circle cx="14.3" cy="10.9" r="0.65" fill="#6a6a6a"/>
<ellipse cx="12.3" cy="14.7" rx="1.4" ry="0.6" fill="#b98676"/>
</g></svg>
<div class="t c14" style="left:1250px;top:423px;letter-spacing:0px">Orlando Queen</div>
<div class="rowb" style="top:491px"></div>
<div class="t c14" style="left:188px;top:465px">1196</div>
<div class="t c14" style="left:264px;top:465px;letter-spacing:-0.065px">Content: Main Page content (Check update)</div>
<div class="t c14" style="left:1112px;top:465px;letter-spacing:0px">New</div>
<svg class="a" style="left:1218px;top:459px" width="24" height="24" viewBox="0 0 24 24">
<defs><clipPath id="cp1218459"><circle cx="12" cy="12" r="12"/></clipPath></defs>
<g clip-path="url(#cp1218459)"><circle cx="12" cy="12" r="12" fill="#7ed87a"/>
<path d="M1 24.5 Q2 19.5 7 18.4 L17 18.4 Q22 19.5 23 24.5 Z" fill="#1d3f8f"/>
<rect x="10" y="15" width="4" height="4" fill="#e6bc98"/>
<path d="M8.3 18.4 L12 23.5 L15.7 18.4 Z" fill="#fff"/>
<path d="M11.2 19.3 H12.8 L13.3 24 H10.7Z" fill="#2a8cf0"/>
<path d="M7.6 9 Q7.6 5.8 12 5.8 Q16.4 5.8 16.4 9 V13 Q16.4 17.6 12 17.6 Q7.6 17.6 7.6 13Z" fill="#f0cfab"/>
<path d="M6.2 10.5 Q5.6 2.4 12 2.4 Q18.4 2.4 18 10.5 L16.5 10.5 Q16.6 6.8 12.5 6.9 Q9.2 7 8.4 8.2 L7.6 10.8Z" fill="#91621f"/>
<circle cx="9.9" cy="10.9" r="0.65" fill="#6a6a6a"/><circle cx="14.3" cy="10.9" r="0.65" fill="#6a6a6a"/>
<ellipse cx="12.3" cy="14.7" rx="1.4" ry="0.6" fill="#b98676"/>
</g></svg>
<div class="t c14" style="left:1250px;top:465px;letter-spacing:-0.28px">Jean Bernard</div>
<div class="rowb" style="top:533px"></div>
<div class="t c14" style="left:188px;top:507px">1195</div>
<div class="t c14" style="left:264px;top:507px;letter-spacing:-0.143px">Content: Terms and Privacy agreement</div>
<div class="t c14" style="left:1112px;top:507px;letter-spacing:-0.3px">In Progress</div>
<svg class="a" style="left:1218px;top:501px" width="24" height="24" viewBox="0 0 24 24">
<defs><clipPath id="cp1218501"><circle cx="12" cy="12" r="12"/></clipPath></defs>
<g clip-path="url(#cp1218501)"><circle cx="12" cy="12" r="12" fill="#d98af0"/>
<path d="M1 24.5 Q2 19.5 7 18.4 L17 18.4 Q22 19.5 23 24.5 Z" fill="#1d3f8f"/>
<rect x="10" y="15" width="4" height="4" fill="#e6bc98"/>
<path d="M8.3 18.4 L12 23.5 L15.7 18.4 Z" fill="#fff"/>
<path d="M11.2 19.3 H12.8 L13.3 24 H10.7Z" fill="#2a8cf0"/>
<path d="M7.6 9 Q7.6 5.8 12 5.8 Q16.4 5.8 16.4 9 V13 Q16.4 17.6 12 17.6 Q7.6 17.6 7.6 13Z" fill="#f0cfab"/>
<path d="M6.2 10.5 Q5.6 2.4 12 2.4 Q18.4 2.4 18 10.5 L16.5 10.5 Q16.6 6.8 12.5 6.9 Q9.2 7 8.4 8.2 L7.6 10.8Z" fill="#91621f"/>
<circle cx="9.9" cy="10.9" r="0.65" fill="#6a6a6a"/><circle cx="14.3" cy="10.9" r="0.65" fill="#6a6a6a"/>
<ellipse cx="12.3" cy="14.7" rx="1.4" ry="0.6" fill="#b98676"/>
</g></svg>
<div class="t c14" style="left:1250px;top:507px;letter-spacing:-0.15px">Tim Burley</div>
<div class="a" style="left:132px;top:534px;width:1308px;height:42px;background:#f5f5f5"></div>
<div class="a" style="left:156px;top:547px;width:16px;height:16px;border:1.5px solid #6e6e6e;border-radius:2px;background:#fff"></div>
<svg class="a" style="left:1071px;top:553px" width="17" height="4" viewBox="0 0 17 4">
<circle cx="2" cy="2" r="1.4" fill="#333"/><circle cx="8.5" cy="2" r="1.4" fill="#333"/><circle cx="15" cy="2" r="1.4" fill="#333"/></svg>
<div class="rowb" style="top:575px"></div>
<div class="t c14" style="left:188px;top:549px">1194</div>
<div class="t c14" style="left:264px;top:549px;letter-spacing:0.100px">Content: Write advertisement content for our website/phone app.</div>
<div class="t c14" style="left:1112px;top:549px;letter-spacing:-0.3px">In Progress</div>
<svg class="a" style="left:1218px;top:543px" width="24" height="24" viewBox="0 0 24 24">
<defs><clipPath id="cp1218543"><circle cx="12" cy="12" r="12"/></clipPath></defs>
<g clip-path="url(#cp1218543)"><circle cx="12" cy="12" r="12" fill="#d98af0"/>
<path d="M1 24.5 Q2 19.5 7 18.4 L17 18.4 Q22 19.5 23 24.5 Z" fill="#1d3f8f"/>
<rect x="10" y="15" width="4" height="4" fill="#e6bc98"/>
<path d="M8.3 18.4 L12 23.5 L15.7 18.4 Z" fill="#fff"/>
<path d="M11.2 19.3 H12.8 L13.3 24 H10.7Z" fill="#2a8cf0"/>
<path d="M7.6 9 Q7.6 5.8 12 5.8 Q16.4 5.8 16.4 9 V13 Q16.4 17.6 12 17.6 Q7.6 17.6 7.6 13Z" fill="#f0cfab"/>
<path d="M6.2 10.5 Q5.6 2.4 12 2.4 Q18.4 2.4 18 10.5 L16.5 10.5 Q16.6 6.8 12.5 6.9 Q9.2 7 8.4 8.2 L7.6 10.8Z" fill="#91621f"/>
<circle cx="9.9" cy="10.9" r="0.65" fill="#6a6a6a"/><circle cx="14.3" cy="10.9" r="0.65" fill="#6a6a6a"/>
<ellipse cx="12.3" cy="14.7" rx="1.4" ry="0.6" fill="#b98676"/>
</g></svg>
<div class="t c14" style="left:1250px;top:549px;letter-spacing:-0.15px">Tim Burley</div>
<div class="rowb" style="top:617px"></div>
<div class="t c14" style="left:188px;top:591px">1193</div>
<div class="t c14" style="left:264px;top:591px;letter-spacing:-0.027px">Mobile: User login, create account</div>
<div class="t c14" style="left:1112px;top:591px;letter-spacing:0px">New</div>
<svg class="a" style="left:1218px;top:585px" width="24" height="24" viewBox="0 0 24 24">
<defs><clipPath id="cp1218585"><circle cx="12" cy="12" r="12"/></clipPath></defs>
<g clip-path="url(#cp1218585)"><circle cx="12" cy="12" r="12" fill="#7ed87a"/>
<path d="M1 24.5 Q2 19.5 7 18.4 L17 18.4 Q22 19.5 23 24.5 Z" fill="#1d3f8f"/>
<rect x="10" y="15" width="4" height="4" fill="#e6bc98"/>
<path d="M8.3 18.4 L12 23.5 L15.7 18.4 Z" fill="#fff"/>
<path d="M11.2 19.3 H12.8 L13.3 24 H10.7Z" fill="#2a8cf0"/>
<path d="M7.6 9 Q7.6 5.8 12 5.8 Q16.4 5.8 16.4 9 V13 Q16.4 17.6 12 17.6 Q7.6 17.6 7.6 13Z" fill="#f0cfab"/>
<path d="M6.2 10.5 Q5.6 2.4 12 2.4 Q18.4 2.4 18 10.5 L16.5 10.5 Q16.6 6.8 12.5 6.9 Q9.2 7 8.4 8.2 L7.6 10.8Z" fill="#91621f"/>
<circle cx="9.9" cy="10.9" r="0.65" fill="#6a6a6a"/><circle cx="14.3" cy="10.9" r="0.65" fill="#6a6a6a"/>
<ellipse cx="12.3" cy="14.7" rx="1.4" ry="0.6" fill="#b98676"/>
</g></svg>
<div class="t c14" style="left:1250px;top:591px;letter-spacing:-0.28px">Jean Bernard</div>
<div class="rowb" style="top:659px"></div>
<div class="t c14" style="left:188px;top:633px">1192</div>
<div class="t c14" style="left:264px;top:633px;letter-spacing:0.017px">Mobile: add streaming potocol to ExoVideoPlayer</div>
<div class="t c14" style="left:1112px;top:633px;letter-spacing:-0.3px">In Progress</div>
<svg class="a" style="left:1218px;top:627px" width="24" height="24" viewBox="0 0 24 24">
<defs><clipPath id="cp1218627"><circle cx="12" cy="12" r="12"/></clipPath></defs>
<g clip-path="url(#cp1218627)"><circle cx="12" cy="12" r="12" fill="#f7d47c"/>
<path d="M1 24.5 Q2 19.5 7 18.4 L17 18.4 Q22 19.5 23 24.5 Z" fill="#1d3f8f"/>
<rect x="10" y="15" width="4" height="4" fill="#e6bc98"/>
<path d="M8.3 18.4 L12 23.5 L15.7 18.4 Z" fill="#fff"/>
<path d="M11.2 19.3 H12.8 L13.3 24 H10.7Z" fill="#2a8cf0"/>
<path d="M7.6 9 Q7.6 5.8 12 5.8 Q16.4 5.8 16.4 9 V13 Q16.4 17.6 12 17.6 Q7.6 17.6 7.6 13Z" fill="#f0cfab"/>
<path d="M6.2 10.5 Q5.6 2.4 12 2.4 Q18.4 2.4 18 10.5 L16.5 10.5 Q16.6 6.8 12.5 6.9 Q9.2 7 8.4 8.2 L7.6 10.8Z" fill="#91621f"/>
<circle cx="9.9" cy="10.9" r="0.65" fill="#6a6a6a"/><circle cx="14.3" cy="10.9" r="0.65" fill="#6a6a6a"/>
<ellipse cx="12.3" cy="14.7" rx="1.4" ry="0.6" fill="#b98676"/>
</g></svg>
<div class="t c14" style="left:1250px;top:633px;letter-spacing:0px">Orlando Queen</div>
<div class="rowb" style="top:701px"></div>
<div class="t c14" style="left:188px;top:675px">1191</div>
<div class="t c14" style="left:264px;top:675px;letter-spacing:-0.046px">Mobile: Create shopping cart and Payment</div>
<div class="t c14" style="left:1112px;top:675px;letter-spacing:0px">New</div>
<svg class="a" style="left:1218px;top:669px" width="24" height="24" viewBox="0 0 24 24">
<defs><clipPath id="cp1218669"><circle cx="12" cy="12" r="12"/></clipPath></defs>
<g clip-path="url(#cp1218669)"><circle cx="12" cy="12" r="12" fill="#d98af0"/>
<path d="M1 24.5 Q2 19.5 7 18.4 L17 18.4 Q22 19.5 23 24.5 Z" fill="#1d3f8f"/>
<rect x="10" y="15" width="4" height="4" fill="#e6bc98"/>
<path d="M8.3 18.4 L12 23.5 L15.7 18.4 Z" fill="#fff"/>
<path d="M11.2 19.3 H12.8 L13.3 24 H10.7Z" fill="#2a8cf0"/>
<path d="M7.6 9 Q7.6 5.8 12 5.8 Q16.4 5.8 16.4 9 V13 Q16.4 17.6 12 17.6 Q7.6 17.6 7.6 13Z" fill="#f0cfab"/>
<path d="M6.2 10.5 Q5.6 2.4 12 2.4 Q18.4 2.4 18 10.5 L16.5 10.5 Q16.6 6.8 12.5 6.9 Q9.2 7 8.4 8.2 L7.6 10.8Z" fill="#91621f"/>
<circle cx="9.9" cy="10.9" r="0.65" fill="#6a6a6a"/><circle cx="14.3" cy="10.9" r="0.65" fill="#6a6a6a"/>
<ellipse cx="12.3" cy="14.7" rx="1.4" ry="0.6" fill="#b98676"/>
</g></svg>
<div class="t c14" style="left:1250px;top:675px;letter-spacing:-0.15px">Tim Burley</div>
<div class="rowb" style="top:743px"></div>
<div class="t c14" style="left:188px;top:717px">1190</div>
<div class="t c14" style="left:264px;top:717px;letter-spacing:-0.071px">Mobile: create Credit card tab and API receivers.</div>
<div class="t c14" style="left:1112px;top:717px;letter-spacing:0px">Done</div>
<svg class="a" style="left:1218px;top:711px" width="24" height="24" viewBox="0 0 24 24">
<defs><clipPath id="cp1218711"><circle cx="12" cy="12" r="12"/></clipPath></defs>
<g clip-path="url(#cp1218711)"><circle cx="12" cy="12" r="12" fill="#f7d47c"/>
<path d="M1 24.5 Q2 19.5 7 18.4 L17 18.4 Q22 19.5 23 24.5 Z" fill="#1d3f8f"/>
<rect x="10" y="15" width="4" height="4" fill="#e6bc98"/>
<path d="M8.3 18.4 L12 23.5 L15.7 18.4 Z" fill="#fff"/>
<path d="M11.2 19.3 H12.8 L13.3 24 H10.7Z" fill="#2a8cf0"/>
<path d="M7.6 9 Q7.6 5.8 12 5.8 Q16.4 5.8 16.4 9 V13 Q16.4 17.6 12 17.6 Q7.6 17.6 7.6 13Z" fill="#f0cfab"/>
<path d="M6.2 10.5 Q5.6 2.4 12 2.4 Q18.4 2.4 18 10.5 L16.5 10.5 Q16.6 6.8 12.5 6.9 Q9.2 7 8.4 8.2 L7.6 10.8Z" fill="#91621f"/>
<circle cx="9.9" cy="10.9" r="0.65" fill="#6a6a6a"/><circle cx="14.3" cy="10.9" r="0.65" fill="#6a6a6a"/>
<ellipse cx="12.3" cy="14.7" rx="1.4" ry="0.6" fill="#b98676"/>
</g></svg>
<div class="t c14" style="left:1250px;top:717px;letter-spacing:0px">Orlando Queen</div>

<div class="a" style="left:132px;top:767px;width:1308px;height:43px;background:#fafafa;border-top:1px solid #e3e3e3"></div>
<div class="t c14" style="left:156px;top:784px">1 - 12 / 45 items</div>
<svg class="a" style="left:1204px;top:783px" width="40" height="12" viewBox="0 0 40 12">
<path d="M2 1.5 V10.5" stroke="#cfcfcf" stroke-width="1.3"/><path d="M10.5 1.5 L4 6 L10.5 10.5Z" fill="#cfcfcf"/>
<path d="M37.5 2 L31 6 L37.5 10Z" fill="#cfcfcf"/>
</svg>
<div class="a" style="left:1256px;top:779px;width:20px;height:20px;background:#740a12;border-radius:3px"></div>
<div class="t" style="left:1256px;top:782px;width:20px;text-align:center;font-size:14px;color:#fff">1</div>
<div class="t c14" style="left:1284px;top:782px;width:20px;text-align:center">2</div>
<div class="t c14" style="left:1312px;top:782px;width:20px;text-align:center">3</div>
<div class="t c14" style="left:1340px;top:782px;width:20px;text-align:center">4</div>
<svg class="a" style="left:1372px;top:783px" width="40" height="12" viewBox="0 0 40 12">
<path d="M2.5 2 L9 6 L2.5 10Z" fill="#333"/>
<path d="M29.5 1.5 L36 6 L29.5 10.5Z" fill="#333"/><path d="M38 1.5 V10.5" stroke="#333" stroke-width="1.4"/>
</svg>


<div class="a" style="left:1281px;top:156px;width:135px;height:208px;background:#fff;border-radius:4px;box-shadow:0 6.4px 14.4px rgba(0,0,0,0.13),0 1.2px 3.6px rgba(0,0,0,0.11)"></div>
<svg class="a" style="left:1297px;top:173px" width="16" height="14" viewBox="0 0 16 14">
<path fill-rule="evenodd" d="M4 0 H12 L16 7 L12 14 H4 L0 7Z M8 3 A4 4 0 1 0 8 11 A4 4 0 1 0 8 3Z" fill="#333"/>
</svg>
<div class="t mi" style="left:1321px;top:174px">Configure</div>
<svg class="a" style="left:1297px;top:204px" width="16" height="16" viewBox="0 0 16 16">
<path d="M0 16 L0.6 12.5 L10.5 2.6 L13.4 5.5 L3.5 15.4Z" fill="#333"/>
<path d="M11.3 1.8 L12.6 0.5 Q13.2 0 13.8 0.5 L15.5 2.2 Q16 2.8 15.5 3.4 L14.2 4.7Z" fill="#333"/>
</svg>
<div class="t mi" style="left:1321px;top:206px">Edit</div>
<svg class="a" style="left:1296px;top:236px" width="17" height="17" viewBox="0 0 17 17">
<circle cx="13" cy="3.5" r="2.5" fill="none" stroke="#333" stroke-width="1.1"/>
<circle cx="3.5" cy="8.5" r="2.5" fill="none" stroke="#333" stroke-width="1.1"/>
<circle cx="13" cy="13.5" r="2.5" fill="none" stroke="#333" stroke-width="1.1"/>
<path d="M5.7 7.3 L10.8 4.7 M5.7 9.7 L10.8 12.3" stroke="#333" stroke-width="1.1"/>
</svg>
<div class="t mi" style="left:1321px;top:238px;letter-spacing:-0.5px">Share</div>
<svg class="a" style="left:1296px;top:268px" width="17" height="17" viewBox="0 0 17 17">
<path d="M8.5 1 L10.6 6.2 L16 6.5 L11.8 10 L13.2 15.5 L8.5 12.4 L3.8 15.5 L5.2 10 L1 6.5 L6.4 6.2Z" fill="#333"/>
</svg>
<div class="t mi" style="left:1321px;top:270px">Add Favorite</div>
<svg class="a" style="left:1296px;top:299px" width="18" height="18" viewBox="0 0 18 18">
<path d="M1.5 9 Q9 3 16.5 9 Q9 15 1.5 9Z" fill="none" stroke="#333" stroke-width="1"/>
<circle cx="9" cy="8.6" r="1.6" fill="#333"/>
<path d="M1.3 1.3 L16.3 16.3" stroke="#333" stroke-width="1"/>
</svg>
<div class="t mi" style="left:1321px;top:302px">Hide</div>
<svg class="a" style="left:1296px;top:330px" width="18" height="19" viewBox="0 0 18 19">
<rect x="5.2" y="2" width="7.6" height="2" fill="#333"/>
<path d="M1 4.3 H17" stroke="#333" stroke-width="1"/>
<path d="M3.7 4.3 V16.5 Q3.7 17.7 4.9 17.7 H13.1 Q14.3 17.7 14.3 16.5 V4.3" fill="none" stroke="#333" stroke-width="1.1"/>
<path d="M7.3 7 V14.6 M10.7 7 V14.6" stroke="#333" stroke-width="1"/>
</svg>
<div class="t mi" style="left:1321px;top:334px;color:#7f7f7f">Delete</div>

</body></html>
